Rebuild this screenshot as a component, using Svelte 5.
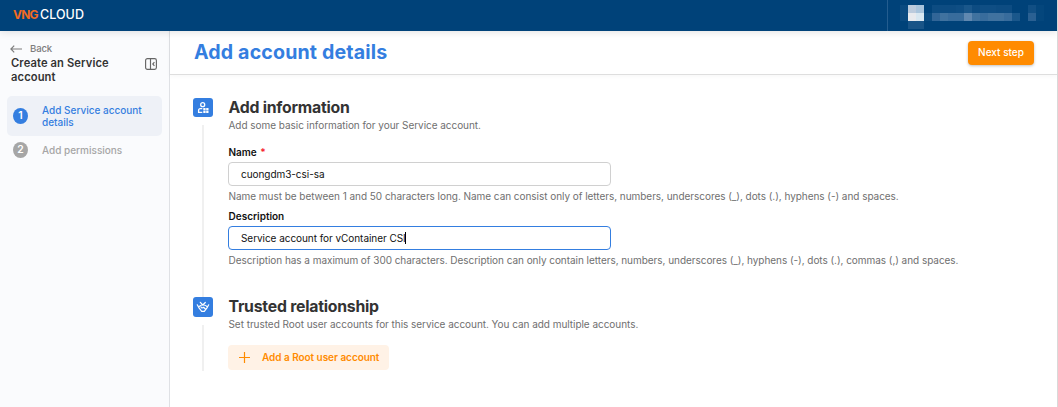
<script lang="ts">
  let name = $state('cuongdm3-csi-sa');
  let description = 'Service account for vContainer CSI';
  const steps = [
    { n: 1, label: 'Add Service account details', active: true },
    { n: 2, label: 'Add permissions', active: false }
  ];
  const mosaic = [
    ['#0a4a80', '#bccbdd', '#a9c4dc', '#004279', '#0d4c82', '#0d4c82', '#0d4c82', '#0f4e84', '#1a578b', '#0d4c82', '#0f4e84', '#0f4e84', '#0d4c82', '#0d4c82', '#004279', '#004279', '#114f84', '#04467c'],
    ['#0a4a80', '#e8eaee', '#d8e7f1', '#0b4b80', '#316597', '#40729f', '#386c9c', '#386c9c', '#6088b0', '#40729f', '#386c9c', '#40729f', '#40729f', '#386c9c', '#1a578b', '#004279', '#2a6092', '#04467c'],
    ['#004279', '#195487', '#195487', '#004279', '#004279', '#004279', '#004279', '#004279', '#004279', '#004279', '#004279', '#004279', '#004279', '#004279', '#004279', '#004279', '#004279', '#004279']
  ];
</script>

<div class="app">
  <header>
    <div class="logo"><span class="vng">VNG</span><span class="cloud">CLOUD</span></div>
    <div class="account">
      <div class="mosaic">
        {#each mosaic as row}
          {#each row as c}<i style="background:{c}"></i>{/each}
        {/each}
      </div>
    </div>
  </header>
  <div class="body">
    <aside>
      <div class="back">
        <svg width="12" height="8" viewBox="0 0 12 8" stroke-width="1.200"><path d="M12 4H1M4.200 .6 .9 4l3.300 3.400" /></svg>
        <span>Back</span>
      </div>
      <div class="heading">
        <h2>Create an Service<br />account</h2>
        <svg width="12" height="12" viewBox="0 0 12 12" stroke-width="1.150"><rect x=".6" y=".6" width="10.800" height="10.800" rx="1.800" /><path d="M5.500 .8v10.400M9.400 4.200 7.800 6l1.600 1.800" /></svg>
      </div>
      <nav>
        {#each steps as s}
          <div class="step" class:active={s.active}><b>{s.n}</b><span>{s.label}</span></div>
        {/each}
      </nav>
    </aside>
    <main>
      <div class="title"><h1>Add account details</h1><button class="next">Next step</button></div>
      <div class="content">
        <section class="info">
          <div class="rail">
            <div class="icon">
              <svg width="14" height="14" viewBox="0 0 14 14" stroke-width="1.300"><circle cx="6.700" cy="3.700" r="2" /><path d="M6.300 7.700H4.300Q2.600 7.700 2.600 9.300V11.300H6.300" /><path fill="currentColor" stroke="none" d="M7.300 7h2.300v2.200H7.300zM10.200 7h2.300v2.200h-2.300zM7.300 9.800h2.300V12H7.300zM10.200 9.800h2.300V12h-2.300z" /></svg>
            </div>
            <div class="line"></div>
          </div>
          <div class="fields">
            <h3>Add information</h3>
            <p class="sub">Add some basic information for your Service account.</p>
            <label class="first" for="name">Name <em>*</em></label>
            <input id="name" bind:value={name} />
            <p class="help">Name must be between 1 and 50 characters long. Name can consist only of letters, numbers, underscores (_), dots (.), hyphens (-) and spaces.</p>
            <span class="label">Description</span>
            <div class="input focus">{description}<i class="caret"></i></div>
            <p class="help">Description has a maximum of 300 characters. Description can only contain letters, numbers, underscores (_), hyphens (-), dots (.), commas (,) and spaces.</p>
          </div>
        </section>
        <section class="trust">
          <div class="rail">
            <div class="icon">
              <svg width="14" height="14" viewBox="0 0 14 14" stroke-width="1.200" stroke-linecap="round" stroke-linejoin="round"><path d="M1.300 4.800 3.200 8.200 5.700 11.300H8.300L10.800 8.200 12.700 4.800M3.400 6.300Q4.500 4.800 6.800 5L4.300 2.300M6.800 5 9.300 2.500M6.800 5Q9.500 4.800 10.800 6.300M5 6.800Q5.500 8.800 7.600 7.300L9.600 9.200" /></svg>
            </div>
            <div class="line"></div>
          </div>
          <div class="fields">
            <h3>Trusted relationship</h3>
            <p class="sub">Set trusted Root user accounts for this service account. You can add multiple accounts.</p>
            <button class="add"><svg width="11" height="11" viewBox="0 0 11 11" stroke-width="1.200"><path d="M5.500 0v11M0 5.500h11" /></svg><span>Add a Root user account</span></button>
          </div>
        </section>
      </div>
    </main>
  </div>
</div>

<style>
  :global(body) { background: #fff; overflow: hidden; }
  .app { width: 1058px; height: 407px; font-family: Inter, sans-serif; display: flex; flex-direction: column; box-sizing: border-box; border-right: 1px solid #d9d9d9; overflow: hidden; }
  h1, h2, h3, p { margin: 0; }
  svg { fill: none; stroke: currentColor; flex: none; }
  header { height: 31px; flex: none; background: #004279; display: flex; justify-content: space-between; box-shadow: 0 1px 8px rgba(0, 0, 0, .12); position: relative; z-index: 2; }
  .logo { display: flex; align-items: center; padding: 0 0 2px 13px; font-size: 12.500px; line-height: 12px; }
  .vng { color: #f26b21; font-weight: 700; font-size: 12px; width: 27px; letter-spacing: -.8px; }
  .cloud { color: #fff; font-weight: 500; letter-spacing: .05px; }
  .account { border-left: 1px solid #245d8f; width: 169px; }
  .mosaic { display: grid; grid-template-columns: repeat(18, 8px); grid-auto-rows: 8px; margin: 5px 0 0 12px; }
  .body { flex: 1; display: flex; min-height: 0; }
  aside { width: 170px; flex: none; box-sizing: border-box; background: #fafbfd; border-right: 1px solid #dfe1e5; }
  .back { display: flex; align-items: center; gap: 8px; color: #7d7d7d; font-size: 9.600px; letter-spacing: -.15px; line-height: 12px; font-weight: 500; padding: 12px 0 0 10px; }
  .heading { display: flex; align-items: flex-start; justify-content: space-between; padding: 1px 12px 0 11px; color: #666; }
  .heading svg { margin-top: 2px; }
  h2 { font-size: 11.200px; letter-spacing: .1px; line-height: 14px; font-weight: 600; color: #333; }
  nav { padding: 12px 7px 0 7px; }
  .step { display: flex; align-items: center; gap: 14px; padding-left: 6px; border-radius: 5px; color: #a6a6a6; font-size: 10px; line-height: 12px; font-weight: 550; height: 28px; }
  .step.active { height: 40px; background: #eef1f7; color: #347ee0; }
  .step b { width: 15px; height: 16px; border-radius: 50%; background: #a6a6a6; color: #fff; display: grid; place-items: center; flex: none; font-weight: 600; font-size: 10.400px; line-height: 16px; }
  .step.active b { background: #347ee0; }
  main { flex: 1; min-width: 0; }
  .title { height: 43px; border-bottom: 1px solid #dedede; display: flex; align-items: center; justify-content: space-between; padding: 0 23px 0 24px; box-shadow: 0 1px 5px rgba(0, 0, 0, .04); }
  h1 { color: #347ee0; font-size: 19.600px; letter-spacing: .15px; line-height: 24px; padding-bottom: 2px; font-weight: 700; }
  button { border: 0; font-family: inherit; display: flex; align-items: center; }
  .next { width: 66px; height: 24px; padding: 0 0 2px; justify-content: center; border-radius: 4px; background: #ff8b00; color: #fff; font-size: 10px; font-weight: 500; box-shadow: 0 1px 3px rgba(0, 0, 0, .25); }
  .content { padding: 23px 0 0 23px; }
  section { display: flex; gap: 15px; }
  .info { height: 199px; }
  .trust { height: 74px; }
  .rail { width: 20px; display: flex; flex-direction: column; align-items: center; }
  .icon { width: 20px; height: 19px; border-radius: 3px; background: #347ee0; color: #fff; display: grid; place-items: center; flex: none; }
  .trust .icon { height: 20px; }
  .line { width: 2px; background: #f0f0f0; margin-top: 8px; flex: 1; }
  .fields { display: flex; flex-direction: column; align-items: flex-start; }
  h3 { font-size: 15.800px; letter-spacing: -.23px; line-height: 18px; padding: 1px 0; font-weight: 650; color: #333; }
  p { font-size: 10px; letter-spacing: -.042px; line-height: 14px; color: #6f6f6f; white-space: nowrap; }
  label, .label { font-size: 10px; letter-spacing: 0; line-height: 14px; font-weight: 600; color: #111; }
  label.first { margin-top: 13px; }
  label em { margin-left: 1px; }
  em { color: #f5222d; font-style: normal; }
  input, .input { width: 383px; height: 24px; box-sizing: border-box; border: 1px solid #d0d0d0; border-radius: 4px; padding: 0 12px; margin: 3px 0 3px; font: 10px/22px Inter, sans-serif; letter-spacing: -.05px; color: #111; }
  .label { margin-top: 6px; }
  .focus { border-color: #347ee0; display: flex; align-items: center; }
  .caret { width: 1px; height: 12px; background: #000; margin-left: -1px; }
  .add { margin-top: 14px; width: 161px; height: 25px; border-radius: 4px; padding: 0 0 0 11px; gap: 12px; background: #fff2e6; color: #ff8b00; font-size: 10px; letter-spacing: -.04px; font-weight: 600; white-space: nowrap; }
  .add span { padding-bottom: 2px; }
  .fields p, label, .label, h3 { padding-left: .5px; }
</style>
